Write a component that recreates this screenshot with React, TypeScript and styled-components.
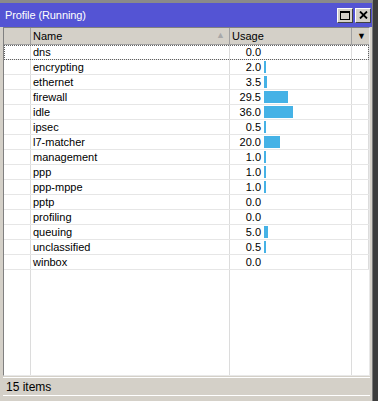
import styled, { createGlobalStyle } from "styled-components";

const GlobalStyle = createGlobalStyle`
  html, body {
    margin: 0;
    padding: 0;
    background: #3c3c3c;
  }
  body {
    font-family: "Liberation Sans", Arial, sans-serif;
    font-size: 11px;
  }
`;

const Screen = styled.div`
  display: flex;
  width: 378px;
  height: 401px;
  background: #3c3c3c;
`;

const Window = styled.div`
  display: flex;
  flex-direction: column;
  width: 373px;
  height: 401px;
  box-sizing: border-box;
  background: #d4d0c8;
  border-top: 3px solid #8a8a8a;
  border-right: 1px solid #7a7a7a;
`;

const TitleBar = styled.div`
  display: flex;
  align-items: center;
  height: 24px;
  padding: 0 1px 0 5px;
  background: #5454d4;
  color: #ffffff;
`;

const Title = styled.div`
  flex: 1;
  font-size: 11px;
  letter-spacing: -0.1px;
`;

const TitleButton = styled.div`
  display: flex;
  align-items: center;
  justify-content: center;
  width: 16px;
  height: 15px;
  margin-left: 2px;
  box-sizing: border-box;
  background: #d4d0c8;
  border: 1px solid;
  border-color: #ffffff #404040 #404040 #ffffff;
`;

const Body = styled.div`
  display: flex;
  flex-direction: column;
  flex: 1;
  padding: 0 2px 0 3px;
`;

const TableBox = styled.div`
  display: flex;
  flex-direction: column;
  flex: 1;
  background: #ffffff;
  border: 1px solid #808080;
  border-right-color: #e8e8e8;
  border-bottom-color: #e8e8e8;
`;

const COLS = "27px 199px 122px 1fr";

const HeaderRow = styled.div`
  display: grid;
  grid-template-columns: ${COLS};
  height: 16px;
  background: #d4d0c8;
  border-bottom: 1px solid #a0a0a0;
`;

const HeaderCell = styled.div<{ $last?: boolean }>`
  display: flex;
  align-items: center;
  padding-left: 2px;
  box-sizing: border-box;
  border-right: ${(p) => (p.$last ? "none" : "1px solid #a0a0a0")};
  color: #000000;
  position: relative;
`;

const SortArrow = styled.span`
  position: absolute;
  right: 4px;
  top: 2px;
  font-size: 9px;
  color: #a8a8a8;
`;

const DropArrow = styled.span`
  margin-left: 3px;
  font-size: 9px;
  color: #000000;
`;

const Row = styled.div<{ $focus?: boolean }>`
  display: grid;
  grid-template-columns: ${COLS};
  height: 15px;
  box-sizing: border-box;
  border-bottom: 1px solid #e6e6e6;
  outline: ${(p) => (p.$focus ? "1px dotted #606060" : "none")};
  outline-offset: -1px;
`;

const Cell = styled.div`
  display: flex;
  align-items: center;
  box-sizing: border-box;
  padding: 0 2px;
  border-right: 1px solid #dcdcdc;
  color: #000000;
  white-space: nowrap;
  overflow: hidden;
`;

const UsageCell = styled(Cell)`
  padding: 0;
`;

const Value = styled.span`
  width: 31px;
  text-align: right;
  flex-shrink: 0;
`;

const Bar = styled.div`
  height: 12px;
  margin-left: 3px;
  background: #45b2e6;
`;

const Filler = styled.div`
  flex: 1;
  display: grid;
  grid-template-columns: ${COLS};
`;

const FillerCell = styled.div`
  border-right: 1px solid #dcdcdc;
`;

const StatusBar = styled.div`
  display: flex;
  align-items: center;
  height: 17px;
  margin: 1px 0 5px 0;
  padding-left: 3px;
  border-top: 1px solid #ffffff;
  border-bottom: 1px solid #ffffff;
  font-size: 12px;
  color: #000000;
`;

const rows: [string, number][] = [
  ["dns", 0],
  ["encrypting", 2.0],
  ["ethernet", 3.5],
  ["firewall", 29.5],
  ["idle", 36.0],
  ["ipsec", 0.5],
  ["l7-matcher", 20.0],
  ["management", 1.0],
  ["ppp", 1.0],
  ["ppp-mppe", 1.0],
  ["pptp", 0],
  ["profiling", 0],
  ["queuing", 5.0],
  ["unclassified", 0.5],
  ["winbox", 0],
];

export default function App() {
  return (
    <Screen>
      <GlobalStyle />
      <Window>
        <TitleBar>
          <Title>Profile (Running)</Title>
          <TitleButton>
            <svg width="10" height="9" viewBox="0 0 10 9">
              <rect x="0.5" y="0.5" width="9" height="8" fill="none" stroke="#000" />
              <line x1="0" y1="1.5" x2="10" y2="1.5" stroke="#000" />
            </svg>
          </TitleButton>
          <TitleButton>
            <svg width="9" height="8" viewBox="0 0 9 8">
              <path d="M1 0.5 L8 7.5 M8 0.5 L1 7.5" stroke="#000" strokeWidth="1.8" />
            </svg>
          </TitleButton>
        </TitleBar>
        <Body>
          <TableBox>
            <HeaderRow>
              <HeaderCell />
              <HeaderCell>
                Name
                <SortArrow>▲</SortArrow>
              </HeaderCell>
              <HeaderCell>Usage</HeaderCell>
              <HeaderCell $last>
                <DropArrow>▼</DropArrow>
              </HeaderCell>
            </HeaderRow>
            {rows.map(([name, usage], i) => (
              <Row key={name} $focus={i === 0}>
                <Cell />
                <Cell>{name}</Cell>
                <UsageCell>
                  <Value>{usage.toFixed(1)}</Value>
                  {usage > 0 && (
                    <Bar style={{ width: Math.max(2, Math.round(usage * 0.8)) }} />
                  )}
                </UsageCell>
                <Cell />
              </Row>
            ))}
            <Filler>
              <FillerCell />
              <FillerCell />
              <FillerCell />
              <div />
            </Filler>
          </TableBox>
          <StatusBar>15 items</StatusBar>
        </Body>
      </Window>
    </Screen>
  );
}
